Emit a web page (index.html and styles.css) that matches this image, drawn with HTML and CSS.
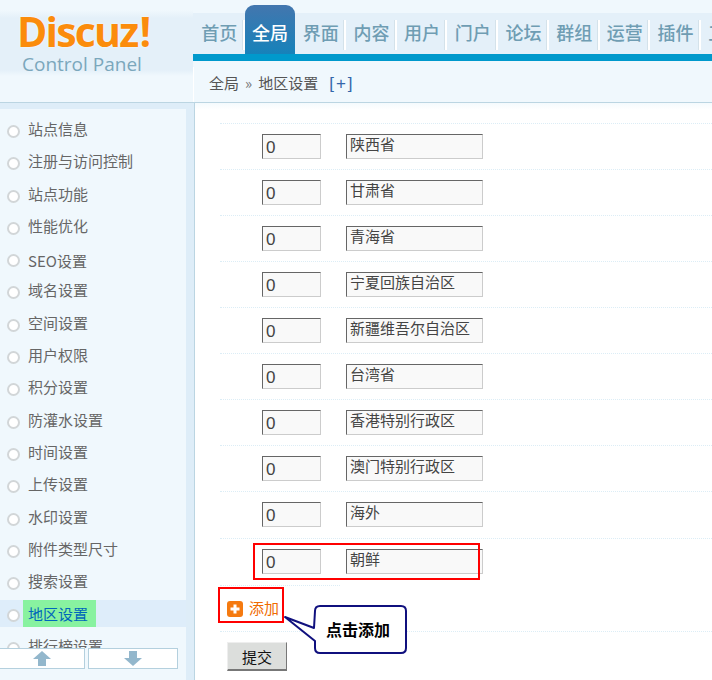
FILE: index.html
```html
<!DOCTYPE html>
<html lang="zh">
<head>
<meta charset="utf-8">
<title>地区设置</title>
<link rel="stylesheet" href="styles.css">
</head>
<body>
<div class="page">
  <header class="head">
    <div class="logo">
      <div class="logo-main">Discuz<span class="bang">!</span></div>
      <div class="logo-sub">Control Panel</div>
    </div>
    <div class="head-right">
      <nav class="nav">
        <a class="nav-item">首页</a>
        <a class="nav-item active">全局</a>
        <a class="nav-item">界面</a>
        <a class="nav-item">内容</a>
        <a class="nav-item">用户</a>
        <a class="nav-item">门户</a>
        <a class="nav-item">论坛</a>
        <a class="nav-item">群组</a>
        <a class="nav-item">运营</a>
        <a class="nav-item">插件</a>
        <a class="nav-item">工具</a>
      </nav>
      <div class="navbar-line"></div>
      <div class="crumb">全局<span class="crumb-sep">»</span>地区设置<span class="crumb-plus">[+]</span></div>
    </div>
  </header>
  <div class="body">
    <aside class="side">
      <div class="side-inner">
        <ul class="menu">
          <li class="menu-item"><span>站点信息</span></li>
          <li class="menu-item"><span>注册与访问控制</span></li>
          <li class="menu-item"><span>站点功能</span></li>
          <li class="menu-item"><span>性能优化</span></li>
          <li class="menu-item seo"><span>SEO设置</span></li>
          <li class="menu-item"><span>域名设置</span></li>
          <li class="menu-item"><span>空间设置</span></li>
          <li class="menu-item"><span>用户权限</span></li>
          <li class="menu-item"><span>积分设置</span></li>
          <li class="menu-item"><span>防灌水设置</span></li>
          <li class="menu-item"><span>时间设置</span></li>
          <li class="menu-item"><span>上传设置</span></li>
          <li class="menu-item"><span>水印设置</span></li>
          <li class="menu-item"><span>附件类型尺寸</span></li>
          <li class="menu-item"><span>搜索设置</span></li>
          <li class="menu-item current"><span>地区设置</span></li>
          <li class="menu-item"><span>排行榜设置</span></li>
        </ul>
        <div class="scroll-btns">
          <button class="scroll-btn first" type="button"><svg width="18" height="15" viewBox="0 0 18 15"><path d="M9 0 L18 8 H13 V15 H5 V8 H0 Z" fill="#93b7cc"/></svg></button>
          <button class="scroll-btn second" type="button"><svg width="18" height="15" viewBox="0 0 18 15"><path d="M9 15 L18 7 H13 V0 H5 V7 H0 Z" fill="#93b7cc"/></svg></button>
        </div>
      </div>
    </aside>
    <main class="main">
      <div class="row"><input class="f-order" value="0"><input class="f-name" value="陕西省"></div>
      <div class="row"><input class="f-order" value="0"><input class="f-name" value="甘肃省"></div>
      <div class="row"><input class="f-order" value="0"><input class="f-name" value="青海省"></div>
      <div class="row"><input class="f-order" value="0"><input class="f-name" value="宁夏回族自治区"></div>
      <div class="row"><input class="f-order" value="0"><input class="f-name" value="新疆维吾尔自治区"></div>
      <div class="row"><input class="f-order" value="0"><input class="f-name" value="台湾省"></div>
      <div class="row"><input class="f-order" value="0"><input class="f-name" value="香港特别行政区"></div>
      <div class="row"><input class="f-order" value="0"><input class="f-name" value="澳门特别行政区"></div>
      <div class="row"><input class="f-order" value="0"><input class="f-name" value="海外"></div>
      <div class="row last"><input class="f-order" value="0"><input class="f-name" value="朝鲜"></div>
      <div class="short-rule"></div>
      <div class="add-row">
        <svg class="add-icon" width="16" height="16" viewBox="0 0 16 16"><rect width="16" height="16" rx="3" fill="#f57a10"/><path d="M8 3.5 V12.5 M3.5 8 H12.5" stroke="#fff" stroke-width="3"/></svg>
        <a class="add-link">添加</a>
      </div>
      <div class="submit-row"><button class="submit" type="button">提交</button></div>
    </main>
  </div>
  <div class="mark mark-row"></div>
  <div class="mark mark-add"></div>
  <div class="callout">
    <svg width="126" height="52" viewBox="0 0 126 52"><path d="M32 6 Q32 1 37 1 H118 Q123 1 123 6 V43 Q123 48 118 48 H37 Q32 48 32 43 V36 L2 12 L31 23 Z" fill="#fff" stroke="#10107e" stroke-width="2" stroke-linejoin="round"/></svg>
    <span class="callout-text">点击添加</span>
  </div>
</div>
</body>
</html>
```
FILE: styles.css
```css
* { box-sizing: border-box; }
html, body { margin: 0; padding: 0; }
body { font-family: "Noto Sans CJK SC", "Liberation Sans", sans-serif; background: #fff; }
.page { position: relative; width: 712px; height: 680px; overflow: hidden; display: flex; flex-direction: column; }

.head { height: 103px; flex: none; display: flex; background: #f0f8fd; border-bottom: 1px solid #bbd5e2; }
.logo { width: 193px; flex: none; height: 76px; padding: 10px 0 0 17px; background: linear-gradient(#f0f8fd 10px, #e4f0f9 18px, #e4f0f9 70px, #f0f8fd 76px); }
.logo-main { font-family: "Open Sans", "Liberation Sans", sans-serif; font-weight: 700; font-size: 41px; line-height: 42px; height: 44px; letter-spacing: -1.8px; color: #fb8c0c; text-shadow: 0 0 2px #fff; }
.bang { margin-left: 2px; }
.logo-sub { font-family: "Open Sans", "Liberation Sans", sans-serif; font-size: 19px; line-height: 20px; color: #7ba7bc; padding-left: 5px; white-space: nowrap; }

.head-right { flex: 1; min-width: 0; display: flex; flex-direction: column; overflow: hidden; }
.nav { height: 54px; display: flex; padding: 5px 0 0 1px; background: linear-gradient(#f0f8fd 13px, #e4f0f9 13px); white-space: nowrap; }
.nav-item { width: 50.7px; flex: none; height: 49px; padding-top: 14px; text-align: center; font-size: 18px; line-height: 26px; font-weight: 500; color: #6f9db3; position: relative; }
.nav-item::after { content: ""; position: absolute; right: 0; top: 15px; width: 2px; height: 30px; background: #fff; border-left: 1px solid #d4e2ea; }
.nav-item.active { color: #fff; background: linear-gradient(#4376ae, #1682ba); border-radius: 9px 9px 0 0; }
.nav-item.active::after { display: none; }
.navbar-line { height: 7px; background: #0099cc; flex: none; }
.crumb { margin-top: 6px; flex: 1; padding: 0 0 0 15px; font-size: 15px; line-height: 31px; color: #555; background: #f0f8fd; border-left: 1px solid #fff; white-space: nowrap; }
.crumb-sep { margin: 0 6px; color: #777; }
.crumb-plus { margin-left: 11px; color: #3366aa; letter-spacing: 2px; font-size: 17px; font-family: "Liberation Sans", sans-serif; }

.body { flex: 1; min-height: 0; display: flex; }
.side { width: 195px; flex: none; background: #deedf8; border-right: 1px solid #bbd5e2; padding: 6px 8px 0 0; }
.side-inner { height: 100%; background: #f0f8fd; display: flex; flex-direction: column; }
.menu { list-style: none; margin: 0; padding: 4px 0 0; height: 539px; flex: none; overflow: hidden; }
.menu-item { height: 32.3px; line-height: 32px; padding-left: 28px; font-size: 15px; color: #666; position: relative; white-space: nowrap; }
.menu-item::before { content: ""; position: absolute; left: 7px; top: 12px; width: 9px; height: 9px; border-radius: 50%; border: 2px solid #d2d6d8; background: #fff; }
.menu-item.seo { padding-top: 5px; }
.menu-item.seo span { display: block; line-height: 28px; }
.menu-item.current { background: #deedfa; height: 27px; margin-top: 3px; line-height: 27px; margin-bottom: 2.6px; color: #0066bb; }
.menu-item.current::before { top: 9px; }
.menu-item.current span { display: inline-block; background: #88f2a0; margin-left: -5px; padding: 0 5px; height: 27px; width: 73px; }
.scroll-btns { display: flex; gap: 3px; height: 21px; flex: none; }
.scroll-btn { height: 21px; background: #fff; border: 1px solid #b4d0de; padding: 0; display: flex; align-items: center; justify-content: center; }
.scroll-btn.first { width: 85px; border-left: 0; }
.scroll-btn.second { width: 90px; }

.main { flex: 1; min-width: 0; padding: 20px 0 0 25px; background: linear-gradient(#f4fafd, #fff 7px); background-repeat: no-repeat; }
.row { height: 46px; display: flex; gap: 25px; padding: 10px 0 0 42px; border-top: 1px dotted #dcedf6; }
.row:nth-child(9) { height: 47px; }
.f-order, .f-name { height: 25px; margin: 0; border: 1px solid; border-color: #666 #ccc #ccc #666; background: #f9f9f9; outline: 0; border-radius: 0; }
.f-order { width: 59px; padding: 2px 3px 0; font-family: "Liberation Sans", sans-serif; font-size: 17px; color: #444; }
.f-name { width: 137px; padding: 0 3px 6px; font-family: "Noto Sans CJK SC", sans-serif; font-size: 15px; color: #444; }
.short-rule { width: 120px; border-top: 1px dotted #dcedf6; margin-top: 1px; }
.add-row { height: 47px; display: flex; align-items: center; gap: 6px; padding: 0 0 0 7px; border-bottom: 1px dotted #dcedf6; margin-top: -1px; }
.add-icon { flex: none; margin-top: 1px; }
.add-link { font-size: 15px; color: #f06a00; line-height: 20px; }
.submit-row { padding: 10px 0 0 7px; }
.submit { width: 60px; height: 29px; padding: 0; border: 0; border-top: 1px solid #eee; border-left: 1px solid #eee; border-right: 1px solid #777; border-bottom: 2px solid #777; background: #dcdedc; font-family: "Noto Sans CJK SC", sans-serif; font-size: 15px; color: #111; }

.mark { position: absolute; border: 2px solid #f00; }
.mark-row { left: 253px; top: 543px; width: 227px; height: 37px; }
.mark-add { left: 218px; top: 587px; width: 66px; height: 36px; }
.callout { position: absolute; left: 283px; top: 605px; width: 126px; height: 52px; }
.callout svg { display: block; }
.callout-text { position: absolute; left: 43px; top: 12px; font-size: 16px; line-height: 24px; font-weight: 700; color: #000; white-space: nowrap; }
```
